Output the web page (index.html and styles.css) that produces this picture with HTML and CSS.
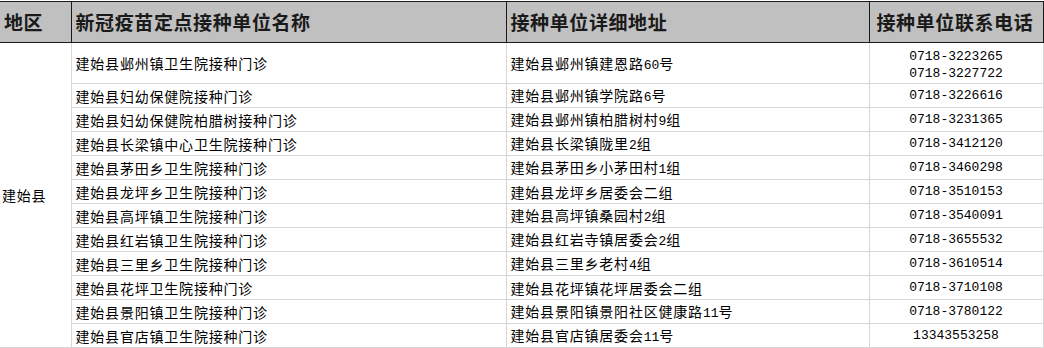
FILE: index.html
```html
<!DOCTYPE html>
<html lang="zh-CN">
<head>
<meta charset="utf-8">
<title>建始县新冠疫苗接种点</title>
<link rel="stylesheet" href="styles.css">
</head>
<body>
<table class="sheet">
  <colgroup>
    <col class="c-area">
    <col class="c-name">
    <col class="c-addr">
    <col class="c-tel">
  </colgroup>
  <thead>
    <tr class="head">
      <th>地区</th>
      <th>新冠疫苗定点接种单位名称</th>
      <th>接种单位详细地址</th>
      <th>接种单位联系电话</th>
    </tr>
  </thead>
  <tbody>
    <tr class="first">
      <td class="area" rowspan="12">建始县</td>
      <td>建始县邺州镇卫生院接种门诊</td>
      <td>建始县邺州镇建恩路<span class="n">60</span>号</td>
      <td class="tel"><span class="t">0718-3223265</span><span class="t">0718-3227722</span></td>
    </tr>
    <tr class="r">
      <td>建始县妇幼保健院接种门诊</td>
      <td>建始县邺州镇学院路<span class="n">6</span>号</td>
      <td class="tel"><span class="t">0718-3226616</span></td>
    </tr>
    <tr class="r">
      <td>建始县妇幼保健院柏腊树接种门诊</td>
      <td>建始县邺州镇柏腊树村<span class="n">9</span>组</td>
      <td class="tel"><span class="t">0718-3231365</span></td>
    </tr>
    <tr class="r">
      <td>建始县长梁镇中心卫生院接种门诊</td>
      <td>建始县长梁镇陇里<span class="n">2</span>组</td>
      <td class="tel"><span class="t">0718-3412120</span></td>
    </tr>
    <tr class="r">
      <td>建始县茅田乡卫生院接种门诊</td>
      <td>建始县茅田乡小茅田村<span class="n">1</span>组</td>
      <td class="tel"><span class="t">0718-3460298</span></td>
    </tr>
    <tr class="r">
      <td>建始县龙坪乡卫生院接种门诊</td>
      <td>建始县龙坪乡居委会二组</td>
      <td class="tel"><span class="t">0718-3510153</span></td>
    </tr>
    <tr class="r">
      <td>建始县高坪镇卫生院接种门诊</td>
      <td>建始县高坪镇桑园村<span class="n">2</span>组</td>
      <td class="tel"><span class="t">0718-3540091</span></td>
    </tr>
    <tr class="r">
      <td>建始县红岩镇卫生院接种门诊</td>
      <td>建始县红岩寺镇居委会<span class="n">2</span>组</td>
      <td class="tel"><span class="t">0718-3655532</span></td>
    </tr>
    <tr class="r">
      <td>建始县三里乡卫生院接种门诊</td>
      <td>建始县三里乡老村<span class="n">4</span>组</td>
      <td class="tel"><span class="t">0718-3610514</span></td>
    </tr>
    <tr class="r">
      <td>建始县花坪卫生院接种门诊</td>
      <td>建始县花坪镇花坪居委会二组</td>
      <td class="tel"><span class="t">0718-3710108</span></td>
    </tr>
    <tr class="r">
      <td>建始县景阳镇卫生院接种门诊</td>
      <td>建始县景阳镇景阳社区健康路<span class="n">11</span>号</td>
      <td class="tel"><span class="t">0718-3780122</span></td>
    </tr>
    <tr class="r">
      <td>建始县官店镇卫生院接种门诊</td>
      <td>建始县官店镇居委会<span class="n">11</span>号</td>
      <td class="tel"><span class="t">13343553258</span></td>
    </tr>
  </tbody>
</table>
</body>
</html>
```

FILE: styles.css
```css
html, body {
  margin: 0;
  padding: 0;
  background: #ffffff;
}

body {
  padding-top: 1px;
  font-family: "Noto Sans CJK SC", "Liberation Sans", sans-serif;
  color: #000;
}

.sheet {
  border-collapse: collapse;
  table-layout: fixed;
  width: 1043px;
}

.c-area { width: 71px; }
.c-name { width: 435px; }
.c-addr { width: 363px; }
.c-tel  { width: 174px; }

.head th {
  height: 40px;
  padding: 0 0 0 4px;
  background: #c0c0c0;
  border: 1px solid #1a1a1a;
  border-left: none;
  font-family: "Noto Sans CJK SC", serif;
  font-weight: 700;
  font-size: 19px;
  letter-spacing: 0.6px;
  text-align: left;
  vertical-align: middle;
  color: #1a1a1a;
  line-height: 20px;
  overflow: hidden;
}

.head th:last-child {
  padding-left: 7px;
}

td {
  border: 1px solid #d6d6d6;
  padding: 0 0 0 4px;
  font-size: 14px;
  letter-spacing: 0.8px;
  line-height: 16px;
  vertical-align: middle;
  white-space: nowrap;
  overflow: hidden;
}

td:first-child { border-left: none; }

.first td { height: 40px; }
.r td { height: 23px; }

.area {
  padding-left: 2px;
}

.tel {
  text-align: center;
  padding: 0;
  letter-spacing: 0;
}

.first .tel {
  padding-top: 3px;
  height: 37px;
}

.n {
  font-family: "Liberation Mono", monospace;
  font-size: 13px;
  letter-spacing: 0;
  line-height: 1;
}

.t {
  display: block;
  font-family: "Liberation Mono", monospace;
  font-size: 13px;
  line-height: 17px;
}
```
